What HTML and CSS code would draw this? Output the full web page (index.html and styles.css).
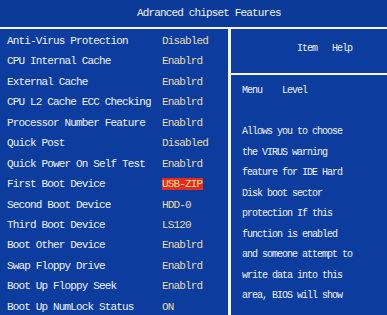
FILE: index.html
```html
<!DOCTYPE html>
<html lang="en">
<head>
    <meta charset="UTF-8">
    <meta name="viewport" content="width=device-width, initial-scale=1.0">
    <title>Advanced chipset Features</title>
    <link rel="stylesheet" href="styles.css">
</head>
<body>
    <div class="title-bar">Adranced chipset Features</div>

    <div class="screen">
        <div class="settings">
            <div class="row"><span class="label">Anti-Virus Protection</span><span class="value">Disabled</span></div>
            <div class="row"><span class="label">CPU Internal Cache</span><span class="value">Enablrd</span></div>
            <div class="row"><span class="label">External Cache</span><span class="value">Enablrd</span></div>
            <div class="row"><span class="label">CPU L2 Cache ECC Checking</span><span class="value">Enablrd</span></div>
            <div class="row"><span class="label">Processor Number Feature</span><span class="value">Enablrd</span></div>
            <div class="row"><span class="label">Quick Post</span><span class="value">Disabled</span></div>
            <div class="row"><span class="label">Quick Power On Self Test</span><span class="value">Enablrd</span></div>
            <div class="row"><span class="label">First Boot Device</span><span class="value selected">USB-ZIP</span></div>
            <div class="row"><span class="label">Second Boot Device</span><span class="value">HDD-0</span></div>
            <div class="row"><span class="label">Third Boot Device</span><span class="value">LS120</span></div>
            <div class="row"><span class="label">Boot Other Device</span><span class="value">Enablrd</span></div>
            <div class="row"><span class="label">Swap Floppy Drive</span><span class="value">Enablrd</span></div>
            <div class="row"><span class="label">Boot Up Floppy Seek</span><span class="value">Enablrd</span></div>
            <div class="row"><span class="label">Boot Up NumLock Status</span><span class="value">ON</span></div>
        </div>

        <div class="help-panel">
            <div class="help-title">Item   Help</div>
            <div class="help-body">
                <div class="help-line">Menu    Level</div>
                <div class="help-line">&nbsp;</div>
                <div class="help-line">Allows you to choose</div>
                <div class="help-line">the VIRUS warning</div>
                <div class="help-line">feature for IDE Hard</div>
                <div class="help-line">Disk boot sector</div>
                <div class="help-line">protection If this</div>
                <div class="help-line">function is enabled</div>
                <div class="help-line">and someone attempt to</div>
                <div class="help-line">write data into this</div>
                <div class="help-line">area, BIOS will show</div>
            </div>
        </div>
    </div>
</body>
</html>
```

FILE: styles.css
```css
body {
    margin: 0;
    width: 387px;
    height: 315px;
    overflow: hidden;
    background-color: #0c3d9e;
    color: #eef2fa;
    font-family: "Liberation Mono", "DejaVu Sans Mono", monospace;
    font-size: 11px;
    letter-spacing: -0.85px;
}

.title-bar {
    height: 27px;
    line-height: 26px;
    padding-left: 137px;
    border-bottom: 2px solid #f4f6fb;
    background-color: #0b3a98;
}

.screen {
    display: grid;
    grid-template-columns: 228px 3px 1fr;
    height: 286px;
}

.settings {
    padding-top: 2px;
}

.row {
    display: flex;
    height: 20.45px;
    line-height: 20.45px;
    white-space: nowrap;
}

.label {
    width: 155px;
    padding-left: 7px;
    flex-shrink: 0;
}

.value {
    color: #e6dcae;
}

.value.selected {
    align-self: center;
    height: 12px;
    line-height: 12px;
    padding: 0 1px 0 0;
    background-color: #e42a22;
    color: #f6e08a;
}

.help-panel {
    grid-column: 3;
    border-left: 3px solid #f4f6fb;
    margin-left: -3px;
    font-size: 10px;
    letter-spacing: -1px;
}

.help-title {
    height: 44px;
    line-height: 40px;
    padding-left: 66px;
    white-space: pre;
    border-bottom: 2px solid #f4f6fb;
}

.help-body {
    padding-top: 6px;
    padding-left: 11px;
}

.help-line {
    height: 20.5px;
    line-height: 20.5px;
    white-space: pre;
}
```
